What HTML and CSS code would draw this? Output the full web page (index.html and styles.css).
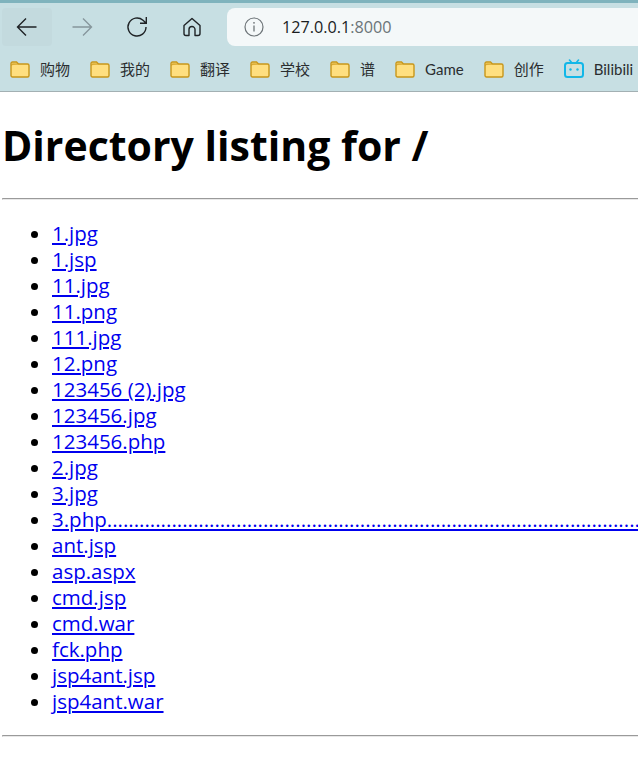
FILE: index.html
```html
<!DOCTYPE html>
<html lang="en">
<head>
  <meta charset="UTF-8" />
  <title>Directory listing for /</title>
  <link rel="stylesheet" href="styles.css">
</head>
<body>
  <div class="browser">
    <div class="toolbar">
      <div class="nav-btn nav-back">
        <svg width="22" height="22" viewBox="0 0 22 22"><path d="M20.5 11H1.5M10 2.5 1.5 11l8.5 8.5" fill="none" stroke="#1f2326" stroke-width="1.4"/></svg>
      </div>
      <div class="nav-btn">
        <svg width="22" height="22" viewBox="0 0 22 22"><path d="M1.5 11h19M12 2.5l8.5 8.5-8.5 8.5" fill="none" stroke="#87979c" stroke-width="1.4"/></svg>
      </div>
      <div class="nav-btn">
        <svg width="22" height="22" viewBox="0 0 22 22"><path d="M20 11a9 9 0 1 1-3-6.7L20 7M20.3 1v6.3H14" fill="none" stroke="#1f2326" stroke-width="1.4"/></svg>
      </div>
      <div class="nav-btn">
        <svg width="22" height="22" viewBox="0 0 22 22"><path d="M3 9.5 11 2.5l8 7v8a2 2 0 0 1-2 2h-3v-6a3 3 0 0 0-6 0v6H5a2 2 0 0 1-2-2z" fill="none" stroke="#1f2326" stroke-width="1.4" stroke-linejoin="round"/></svg>
      </div>
      <div class="address">
        <svg class="info-icon" width="20" height="20" viewBox="0 0 20 20"><circle cx="10" cy="10" r="9" fill="none" stroke="#6d7478" stroke-width="1.2"/><path d="M10 8.5v6" stroke="#6d7478" stroke-width="1.3"/><circle cx="10" cy="5.8" r=".9" fill="#6d7478"/></svg>
        <span class="url">127.0.0.1<span class="port">:8000</span></span>
      </div>
    </div>
    <div class="bookmarks">
      <a class="bookmark"><svg class="folder" viewBox="0 0 20 20"><use href="#folder-icon"/></svg>购物</a>
      <a class="bookmark"><svg class="folder" viewBox="0 0 20 20"><use href="#folder-icon"/></svg>我的</a>
      <a class="bookmark"><svg class="folder" viewBox="0 0 20 20"><use href="#folder-icon"/></svg>翻译</a>
      <a class="bookmark"><svg class="folder" viewBox="0 0 20 20"><use href="#folder-icon"/></svg>学校</a>
      <a class="bookmark"><svg class="folder" viewBox="0 0 20 20"><use href="#folder-icon"/></svg>谱</a>
      <a class="bookmark"><svg class="folder" viewBox="0 0 20 20"><use href="#folder-icon"/></svg>Game</a>
      <a class="bookmark"><svg class="folder" viewBox="0 0 20 20"><use href="#folder-icon"/></svg>创作</a>
      <a class="bookmark">
        <svg class="folder" viewBox="0 0 20 20"><path d="M5.500 1 8 4M14.500 1 12 4" stroke="#12b7e8" stroke-width="1.600" stroke-linecap="round"/><rect x="1" y="4" width="18" height="14" rx="2.500" fill="none" stroke="#12b7e8" stroke-width="2"/><circle cx="6.500" cy="10.500" r="1.200" fill="#12b7e8"/><circle cx="13.500" cy="10.500" r="1.200" fill="#12b7e8"/></svg>
        Bilibili
      </a>
    </div>
  </div>

  <svg class="defs" width="0" height="0">
    <symbol id="folder-icon" viewBox="0 0 20 20">
      <path d="M1 4.500A1.500 1.500 0 0 1 2.500 3h4l2 2h9A1.500 1.500 0 0 1 19 6.500v10a1.500 1.500 0 0 1-1.500 1.500h-15A1.500 1.500 0 0 1 1 16.500z" fill="#ffdf80" stroke="#c8961a" stroke-width="1.400"/>
      <path d="M1.500 6.500c0-1 .500-1.500 1.500-1.500h5" fill="#f2c550" stroke="#c8961a" stroke-width="1"/>
    </symbol>
  </svg>

  <main class="listing">
    <h1>Directory listing for /</h1>
    <hr>
    <ul>
      <li><a href="#">1.jpg</a></li>
      <li><a href="#">1.jsp</a></li>
      <li><a href="#">11.jpg</a></li>
      <li><a href="#">11.png</a></li>
      <li><a href="#">111.jpg</a></li>
      <li><a href="#">12.png</a></li>
      <li><a href="#">123456 (2).jpg</a></li>
      <li><a href="#">123456.jpg</a></li>
      <li><a href="#">123456.php</a></li>
      <li><a href="#">2.jpg</a></li>
      <li><a href="#">3.jpg</a></li>
      <li><a href="#">3.php............................................................................................................................</a></li>
      <li><a href="#">ant.jsp</a></li>
      <li><a href="#">asp.aspx</a></li>
      <li><a href="#">cmd.jsp</a></li>
      <li><a href="#">cmd.war</a></li>
      <li><a href="#">fck.php</a></li>
      <li><a href="#">jsp4ant.jsp</a></li>
      <li><a href="#">jsp4ant.war</a></li>
    </ul>
    <hr>
  </main>
</body>
</html>
```

FILE: styles.css
```css
html, body {
  margin: 0;
  padding: 0;
  overflow: hidden;
  height: 764px;
  background: white;
}
body {
  font-family: "Open Sans", "Noto Sans CJK SC", sans-serif;
}
.browser {
  background-color: #c7dfe3;
  border-top: 3px solid #7fb3bd;
  border-bottom: 1px solid #a3b0b3;
}
.toolbar {
  display: flex;
  align-items: center;
  height: 38px;
  padding: 5px 0 0 2px;
}
.nav-btn {
  width: 50px;
  height: 38px;
  margin-right: 5px;
  display: flex;
  align-items: center;
  justify-content: center;
  border-radius: 4px;
}
.nav-back {
  background-color: #c3dade;
}
.address {
  flex: 1;
  height: 38px;
  margin-left: 5px;
  background-color: #f4f8f9;
  border-radius: 8px 0 0 8px;
  display: flex;
  align-items: center;
  padding-left: 17px;
}
.info-icon {
  margin-right: 18px;
}
.url {
  font-size: 16.2px;
  color: #1a1c1e;
}
.port {
  color: #6b7478;
}
.bookmarks {
  display: flex;
  align-items: center;
  gap: 20px;
  height: 45px;
  padding-left: 10px;
  font-family: "Lato", "Noto Sans CJK SC", sans-serif;
  font-size: 15px;
  color: #2a2d2f;
  white-space: nowrap;
}
.bookmark {
  display: flex;
  align-items: center;
  gap: 10px;
}
.folder {
  width: 20px;
  height: 20px;
}
.defs {
  position: absolute;
}
.listing {
  margin-left: 2px;
  width: 700px;
  font-size: 20.5px;
  line-height: 26px;
}
h1 {
  margin: 0;
  padding: 28px 0 28px 0;
  font-size: 41px;
  line-height: 50px;
  font-weight: 700;
  color: black;
}
hr {
  margin: 0;
  height: 0;
  border: 0;
  border-top: 1px solid #9a9a9a;
  border-bottom: 1px solid #e8e8e8;
  border-left: 1px solid #bbb;
}
ul {
  margin: 20px 0 21px;
  padding-left: 50px;
  white-space: nowrap;
}
.listing a {
  color: #0000ee;
}
```
